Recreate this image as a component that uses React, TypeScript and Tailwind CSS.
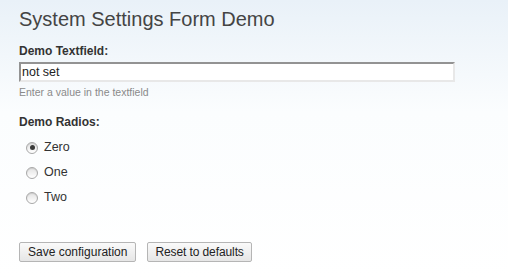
import React, { useState } from "react";

function Radio({ checked, label, onClick }: { checked: boolean; label: string; onClick: () => void }) {
  return (
    <label className="flex items-center gap-[6px] h-[25px] cursor-pointer" onClick={onClick}>
      <span className="w-[12px] h-[12px] rounded-full border border-[#a8a8a8] bg-gradient-to-b from-[#e2e2e2] to-[#ffffff] flex items-center justify-center shadow-[inset_0_1px_1px_rgba(0,0,0,0.1)]">
        {checked && <span className="w-[5px] h-[5px] rounded-full bg-[#3a3a3a]" />}
      </span>
      <span className="text-[12.5px] text-[#333]">{label}</span>
    </label>
  );
}

export default function App() {
  const [val, setVal] = useState("not set");
  const [sel, setSel] = useState(0);
  const opts = ["Zero", "One", "Two"];
  return (
    <div
      className="w-[508px] h-[279px] bg-gradient-to-b from-[#e9f1f8] via-[#fbfdfe] via-[40%] to-white px-[19px] pt-[5px] text-[#333]"
      style={{ fontFamily: '"Liberation Sans", Arial, sans-serif' }}
    >
      <h1 className="text-[20px] leading-[28px] text-[#444]">System Settings Form Demo</h1>
      <div className="mt-[10px] text-[12px] font-bold leading-[16px] text-[#333]">Demo Textfield:</div>
      <input
        value={val}
        onChange={(e) => setVal(e.target.value)}
        className="mt-[3px] block w-[436px] h-[20px] bg-white border-[2px] border-t-[#939393] border-l-[#939393] border-r-[#e8e8e8] border-b-[#e8e8e8] px-[1px] text-[12.5px] text-[#222] outline-none"
      />
      <div className="mt-[3px] text-[10.5px] leading-[14px] text-[#8a8a8a]">Enter a value in the textfield</div>
      <div className="mt-[15px] text-[12px] font-bold leading-[16px] text-[#333]">Demo Radios:</div>
      <div className="mt-[5px] pl-[7px] flex flex-col">
        {opts.map((o, i) => (
          <Radio key={o} label={o} checked={sel === i} onClick={() => setSel(i)} />
        ))}
      </div>
      <div className="mt-[32px] flex gap-[11px]">
        <button className="h-[20px] px-[8px] border border-[#b5b5b5] rounded-[2px] bg-gradient-to-b from-[#fafafa] to-[#e6e6e6] text-[12px] leading-[18px] text-[#222]">
          Save configuration
        </button>
        <button className="h-[20px] px-[7px] border border-[#b5b5b5] rounded-[2px] bg-gradient-to-b from-[#fafafa] to-[#e6e6e6] text-[12px] leading-[18px] text-[#222] tracking-[-0.1px]">
          Reset to defaults
        </button>
      </div>
    </div>
  );
}
